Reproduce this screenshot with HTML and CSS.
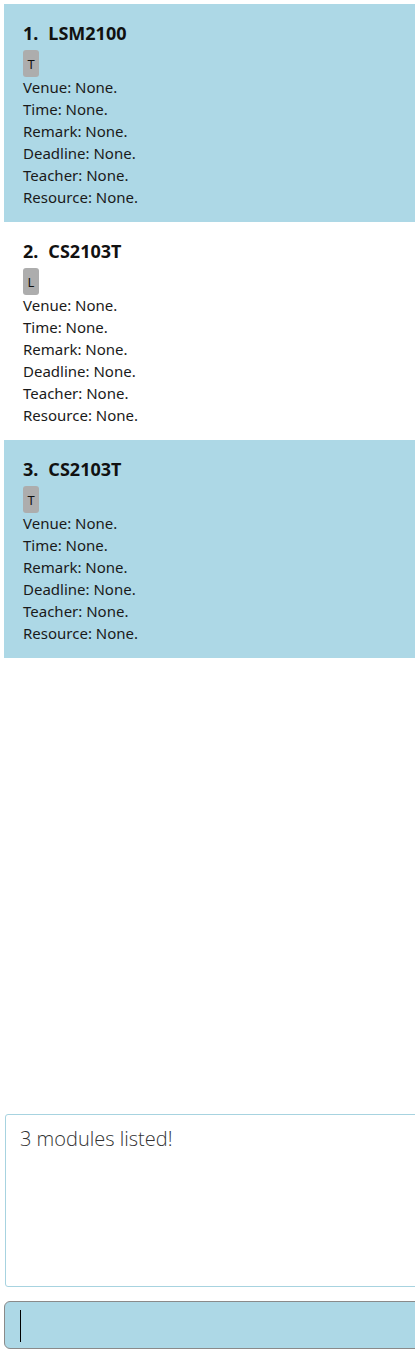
FILE: index.html
```html
<!DOCTYPE html>
<html>
<head>
<meta charset="utf-8">
<link rel="stylesheet" href="styles.css">
</head>
<body>
<div class="app">
  <ul class="list">
    <li class="card odd">
      <div class="title"><span class="idx">1.</span><span class="code">LSM2100</span></div>
      <div class="tags"><span class="tag">T</span></div>
      <div class="field">Venue: None.</div>
      <div class="field">Time: None.</div>
      <div class="field">Remark: None.</div>
      <div class="field">Deadline: None.</div>
      <div class="field">Teacher: None.</div>
      <div class="field">Resource: None.</div>
    </li>
    <li class="card">
      <div class="title"><span class="idx">2.</span><span class="code">CS2103T</span></div>
      <div class="tags"><span class="tag">L</span></div>
      <div class="field">Venue: None.</div>
      <div class="field">Time: None.</div>
      <div class="field">Remark: None.</div>
      <div class="field">Deadline: None.</div>
      <div class="field">Teacher: None.</div>
      <div class="field">Resource: None.</div>
    </li>
    <li class="card odd">
      <div class="title"><span class="idx">3.</span><span class="code">CS2103T</span></div>
      <div class="tags"><span class="tag">T</span></div>
      <div class="field">Venue: None.</div>
      <div class="field">Time: None.</div>
      <div class="field">Remark: None.</div>
      <div class="field">Deadline: None.</div>
      <div class="field">Teacher: None.</div>
      <div class="field">Resource: None.</div>
    </li>
  </ul>
  <div class="result">3 modules listed!</div>
  <div class="command"><span class="caret"></span></div>
</div>
</body>
</html>
```
FILE: styles.css
```css
html, body {
  margin: 0;
  padding: 0;
  background: #ffffff;
}
body {
  font-family: "Noto Sans", "Open Sans", sans-serif;
  color: #1a1a1a;
  overflow: hidden;
}
.app {
  height: 1349px;
  display: flex;
  flex-direction: column;
  padding-top: 4px;
  box-sizing: border-box;
}
.list {
  list-style: none;
  margin: 0;
  padding: 0 0 0 4px;
  flex: 1;
}
.card {
  height: 218px;
  box-sizing: border-box;
  padding: 17px 19px 13px 19px;
  background: #ffffff;
}
.card.odd {
  background: #add8e6;
}
.title {
  display: flex;
  gap: 10px;
  font-size: 18px;
  line-height: 24px;
  font-weight: 700;
  color: #111;
}
.tags {
  display: flex;
  margin-top: 5px;
}
.tag {
  display: flex;
  align-items: center;
  justify-content: center;
  width: 16px;
  height: 27px;
  background: #adadad;
  border-radius: 3px;
  font-size: 13px;
  color: #111;
}
.field {
  font-size: 15px;
  line-height: 22px;
  margin-top: -1px;
  margin-bottom: 1px;
}
.result {
  height: 173px;
  box-sizing: border-box;
  margin: 0 -4px 14px 5px;
  border: 1px solid #a7d3e0;
  border-radius: 3px;
  padding: 10px 14px;
  font-family: "Open Sans", "Noto Sans", sans-serif;
  font-weight: 300;
  font-size: 20px;
  line-height: 28px;
  color: #333;
}
.command {
  height: 48px;
  box-sizing: border-box;
  margin: 0 -6px 0 4px;
  background: #add8e6;
  border: 1px solid #8a8a8a;
  border-radius: 6px;
  display: flex;
  align-items: center;
  padding-left: 15px;
}
.caret {
  width: 1px;
  height: 32px;
  background: #000;
  margin-top: 2px;
}
```
